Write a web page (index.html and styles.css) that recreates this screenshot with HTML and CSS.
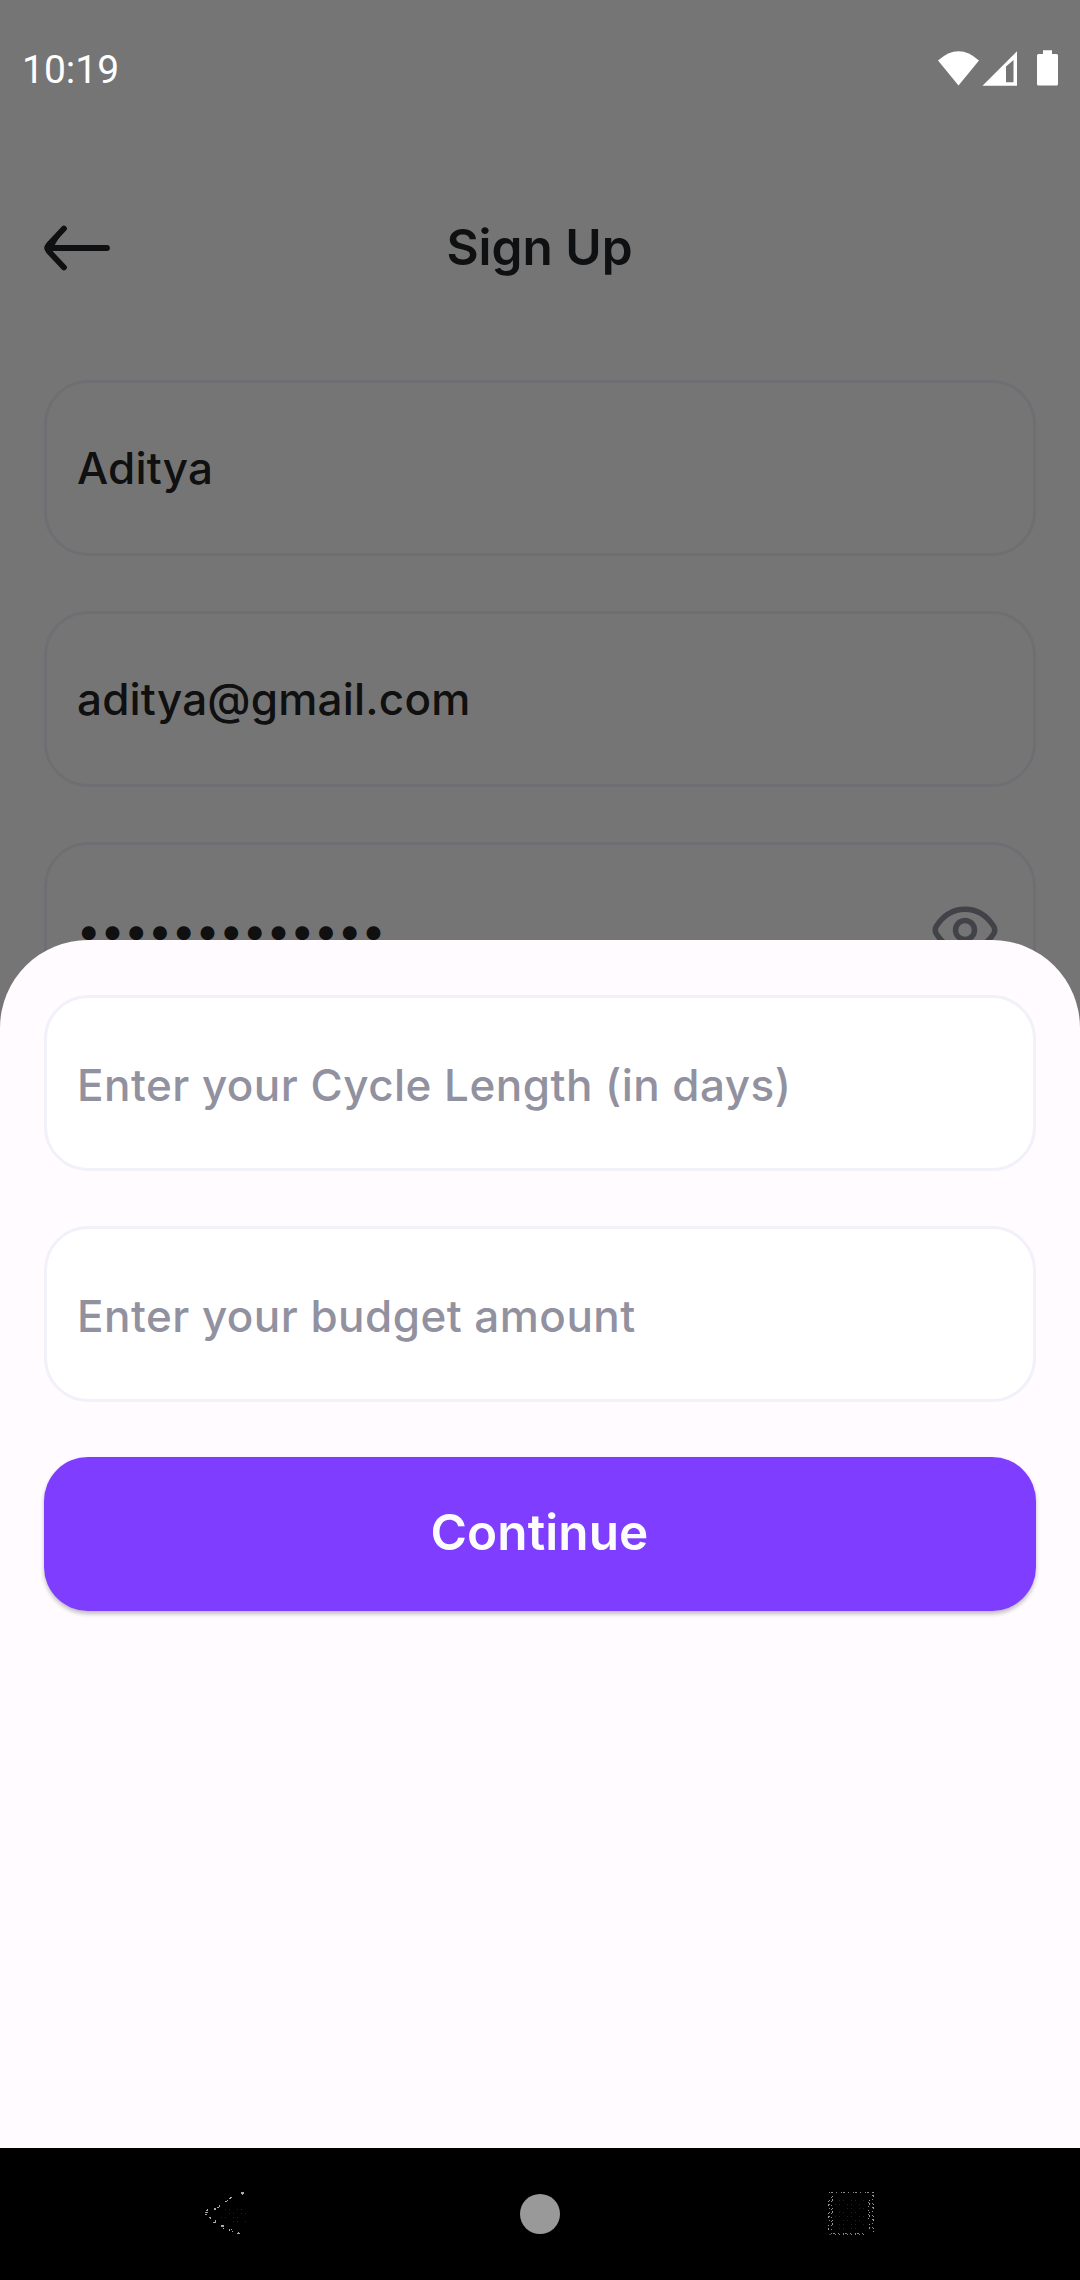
FILE: index.html
```html
<!DOCTYPE html>
<html lang="en">
<head>
<meta charset="utf-8">
<title>Sign Up</title>
<link rel="stylesheet" href="styles.css">
</head>
<body>
<div class="screen">
  <main class="page">
    <header class="appbar">
      <svg class="back" width="68" height="48" viewBox="1 0 68 48" fill="none" stroke="#212325" stroke-width="5.8" stroke-linecap="round" stroke-linejoin="round"><path d="M64 24H5M21 4.500L5.500 21Q3 24 5.500 27L21 43.500"/><path d="M6 23L19 8L10 23Z" fill="#212325" stroke-width="1"/></svg>
      <h1 class="title">Sign Up</h1>
    </header>
    <div class="field">Aditya</div>
    <div class="field">aditya@gmail.com</div>
    <div class="field"><span class="dots">•••••••••••••</span>
      <svg class="eye" width="68" height="50" viewBox="0 0 68 50" fill="none" stroke="#91919f" stroke-width="5.500"><path d="M5.500 21Q16.500 4.300 34 4.300T62.500 21Q65 25 62.500 29Q51.500 45.700 34 45.700T5.500 29Q3 25 5.500 21Z"/><circle cx="34" cy="25" r="9.500"/></svg>
    </div>
  </main>
  <div class="scrim"></div>
  <div class="statusbar">
    <span class="clock">10:19</span>
    <svg width="122" height="38" viewBox="937 48 122 38" fill="#fff"><path d="M938 59.500Q958.500 41 979 59.500L958.500 84.500Z"/><path fill-rule="evenodd" d="M982.500 84.700L1017 50.300V84.700ZM1006 81.300H1013.500V59L1006 65.500Z"/><path d="M1043 49.200H1052V53H1056.500Q1058 53 1058 54.500V83Q1058 84.500 1056.500 84.500H1038.500Q1037 84.500 1037 83V54.500Q1037 53 1038.500 53H1043Z"/></svg>
  </div>
  <section class="sheet">
    <div class="field input">Enter your Cycle Length (in days)</div>
    <div class="field input">Enter your budget amount</div>
    <button class="continue">Continue</button>
  </section>
  <nav class="navbar">
    <svg width="1080" height="132" viewBox="0 2148 1080 132">
      <circle cx="540" cy="2214" r="20" fill="#999"/>
      <path fill="#aaa" d="M241 2192h3v2h-3zM242 2194h1v1h-1zM230 2197h2v1h-2zM229 2198h2v1h-2zM225 2201h2v1h-2zM227 2200h1v1h-1zM219 2205h1v2h-1zM217 2207h2v1h-2zM214 2208h2v2h-2zM206 2210h2v1h-2zM205 2212h3v1h-3zM205 2214h2v1h-2zM207 2209h1v1h-1zM209 2217h2v1h-2zM210 2218h1v1h-1zM213 2222h3v1h-3zM215 2220h1v2h-1zM221 2225h3v2h-3zM223 2228h1v1h-1zM229 2229h1v2h-1zM231 2229h1v1h-1zM232 2231h1v1h-1zM237 2233h3v1h-3zM238 2232h1v1h-1z"/>
      <path fill="none" stroke="#888" stroke-width="1" stroke-dasharray="1 1 2 3 1 4" d="M829 2192.500H875M831 2233.500H864M830 2235V2234"/>
      <path fill="none" stroke="#999" stroke-width="1" stroke-dasharray="1 2 2 7" d="M828.500 2201V2236M832.500 2196V2232M869.500 2200V2236M873.500 2192V2232"/>
      <path fill="none" stroke="#888" stroke-width="1" stroke-dasharray="1 3" d="M829.500 2200V2224M831.500 2197V2233M868.500 2202V2220M872.500 2195V2230M835 2234.500H864"/>
      <path fill="none" stroke="#222" stroke-width="1" stroke-dasharray="1 3 1 7" d="M839 2200.500H864M835 2204.500H861M847 2208.500H864M839 2212.500H861M835 2216.500H864M843 2220.500H861M839 2224.500H864M839 2228.500H861M225 2209.500H247M229 2213.500H247M221 2217.500H243M233 2221.500H247"/>
    </svg>
  </nav>
</div>
</body>
</html>
```
FILE: styles.css
```css
* { box-sizing: border-box; }
body { margin: 0; font-family: Inter, sans-serif; }
.screen { position: relative; width: 1080px; height: 2280px; overflow: hidden; background: #fff; }
.page { display: flex; flex-direction: column; gap: 55px; padding: 171px 44px 0; }
.appbar { display: grid; grid-template-columns: 68px 1fr 68px; align-items: center; height: 153.700px; }
.title { margin: 0; padding: 0 1px 2px 0; text-align: center; font-size: 49.500px; font-weight: 600; line-height: 60px; color: #212325; }
.field { display: flex; align-items: center; justify-content: space-between; height: 176px; padding: 0 34.500px 0 30px; border: 3px solid #f1f1fa; border-radius: 44px; font-size: 44px; font-weight: 500; letter-spacing: .2px; color: #232323; }
.dots { letter-spacing: .270px; }
.scrim { position: absolute; inset: 0; background: rgba(0, 0, 0, .54); }
.statusbar { position: absolute; inset: 0 0 auto; display: flex; align-items: center; justify-content: space-between; height: 136px; padding: 0 21px 1px 22px; color: #fff; }
.clock { padding-top: 4px; font: 39px/44px Roboto, sans-serif; }
.sheet { position: absolute; inset: 939.700px 0 132px; display: flex; flex-direction: column; gap: 55px; padding: 55px 44px; background: #fffbff; border-radius: 88px 88px 0 0; }
.input { flex: none; padding-top: 4px; background: #fff; color: #91919f; letter-spacing: .460px; }
.continue { flex: none; height: 154px; padding: 0 1px 3px 0; border: 0; border-radius: 44px; background: #7f3dff; color: #fcfcfc; font: 600 49.500px/60px Inter, sans-serif; letter-spacing: .1px; box-shadow: 0 3px 4px rgba(0, 0, 0, .25); }
.navbar { position: absolute; inset: auto 0 0; height: 132px; background: #000; }
```
